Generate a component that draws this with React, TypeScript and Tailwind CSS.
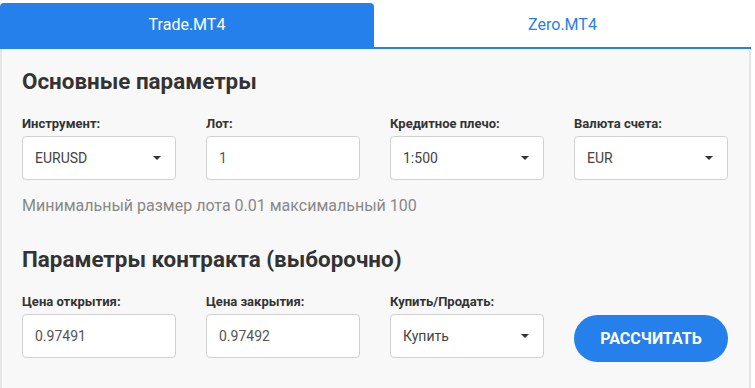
import { useState } from "react"

const Caret = () => (
  <svg width="8" height="4" viewBox="0 0 8 4" className="shrink-0">
    <path d="M0 0h8L4 4z" fill="#333" />
  </svg>
)

const SelectBox = ({ value }: { value: string }) => (
  <div className="h-[44px] w-full bg-white border border-[#d2d2d2] rounded-[4px] flex items-center justify-between pl-[12px] pr-[14px] text-[14px] text-[#444]">
    <span>{value}</span>
    <Caret />
  </div>
)

const InputBox = ({ value }: { value: string }) => (
  <div className="h-[44px] w-full bg-white border border-[#d2d2d2] rounded-[4px] flex items-center pl-[12px] text-[14px] text-[#555]">
    {value}
  </div>
)

const Label = ({ children }: { children: string }) => (
  <div className="text-[13px] leading-[16px] font-bold text-[#333] mb-[4px]">{children}</div>
)

const App = () => {
  const [tab, setTab] = useState(0)

  return (
    <div
      className="w-[755px] h-[388px] bg-white overflow-hidden"
      style={{ fontFamily: "Roboto, 'Liberation Sans', sans-serif" }}
    >
      <div className="w-[751px] pt-[3px]">
        <div className="flex h-[44px]">
          <button
            onClick={() => setTab(0)}
            className={`w-[374px] rounded-t-[4px] text-[16px] ${tab === 0 ? "bg-[#2680eb] text-white" : "text-[#2680eb]"}`}
          >
            Trade.MT4
          </button>
          <button
            onClick={() => setTab(1)}
            className={`flex-1 rounded-t-[4px] text-[16px] ${tab === 1 ? "bg-[#2680eb] text-white" : "text-[#2680eb]"}`}
          >
            Zero.MT4
          </button>
        </div>
        <div className="h-[2px] bg-[#2680eb]" />

        <div className="bg-[#f8f8f8] border-x-2 border-[#e6e6e6] px-[20px] pt-[19px] pb-[40px]">
          <h2 className="text-[22.4px] leading-[26px] font-bold text-[#333]">Основные параметры</h2>

          <div className="grid grid-cols-[154px_154px_154px_154px] gap-x-[30px] mt-[22px]">
            <div>
              <Label>Инструмент:</Label>
              <SelectBox value="EURUSD" />
            </div>
            <div>
              <Label>Лот:</Label>
              <InputBox value="1" />
            </div>
            <div>
              <Label>Кредитное плечо:</Label>
              <SelectBox value="1:500" />
            </div>
            <div>
              <Label>Валюта счета:</Label>
              <SelectBox value="EUR" />
            </div>
          </div>

          <p className="mt-[14px] text-[16px] leading-[24px] text-[#888]">
            Минимальный размер лота 0.01 максимальный 100
          </p>

          <h2 className="mt-[28px] text-[22.4px] leading-[26px] font-bold text-[#333]">
            Параметры контракта (выборочно)
          </h2>

          <div className="grid grid-cols-[154px_154px_154px_154px] gap-x-[30px] mt-[22px]">
            <div>
              <Label>Цена открытия:</Label>
              <InputBox value="0.97491" />
            </div>
            <div>
              <Label>Цена закрытия:</Label>
              <InputBox value="0.97492" />
            </div>
            <div>
              <Label>Купить/Продать:</Label>
              <SelectBox value="Купить" />
            </div>
            <div className="flex items-end">
              <button className="w-full h-[47px] -mb-[4px] rounded-full bg-[#2680eb] text-white text-[16px] font-bold">
                РАССЧИТАТЬ
              </button>
            </div>
          </div>
        </div>
      </div>
    </div>
  )
}

export default App
